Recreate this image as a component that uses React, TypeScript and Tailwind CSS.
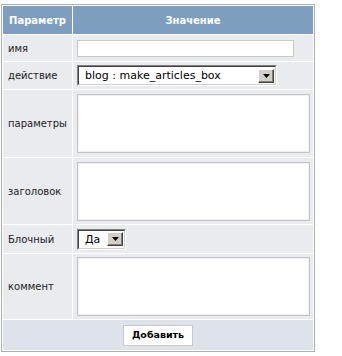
import React from "react";

const font = { fontFamily: '"DejaVu Sans", Verdana, sans-serif' };

function DropBtn() {
  return (
    <div className="flex h-[14px] w-[16px] items-center justify-center border border-t-white border-l-white border-r-[#404040] border-b-[#404040] bg-[#d4d0c8] shadow-[inset_-1px_-1px_0_#808080]">
      <svg width="7" height="4" viewBox="0 0 7 4">
        <path d="M0 0h7L3.5 4z" fill="#000" />
      </svg>
    </div>
  );
}

function Select({ value, w }: { value: string; w: string }) {
  return (
    <div className={`flex h-[21px] ${w} items-center border border-t-[#808080] border-l-[#808080] border-r-white border-b-white bg-white`}>
      <div className="flex h-full w-full items-center border border-t-[#404040] border-l-[#404040] border-r-[#d4d0c8] border-b-[#d4d0c8] pl-[6px] pr-[1px]">
        <span className="flex-1 text-[11px] leading-none text-black" style={font}>
          {value}
        </span>
        <DropBtn />
      </div>
    </div>
  );
}

function Label({ children }: { children: React.ReactNode }) {
  return (
    <div className="flex items-center bg-[#e9ebee] pl-[5px] text-[10px] text-[#222]" style={font}>
      {children}
    </div>
  );
}

function Cell({ children }: { children: React.ReactNode }) {
  return <div className="flex items-center bg-[#e9ebee] pl-[4px] pr-[3px]">{children}</div>;
}

function TextArea() {
  return <div className="h-[59px] w-full border border-[#c4c4c8] bg-white shadow-[inset_0_0_0_1px_#f0f0f0]" />;
}

export default function App() {
  return (
    <div className="min-h-[356px] w-[342px] bg-white pt-[4px] pl-[1px]" style={font}>
      <div className="w-[314px] border border-[#a7afb8] bg-white p-px">
        <div className="grid grid-cols-[69px_1fr] grid-rows-[28px_26px_27px_67px_66px_28px_65px] gap-px">
          <div className="flex items-center justify-center bg-[#7d9ebe] text-[10px] font-bold text-white">
            Параметр
          </div>
          <div className="flex items-center justify-center bg-[#7d9ebe] text-[10px] font-bold text-white">
            Значение
          </div>

          <Label>имя</Label>
          <Cell>
            <div className="h-[17px] w-[217px] border border-[#c8c8cc] bg-white" />
          </Cell>

          <Label>действие</Label>
          <Cell>
            <Select value="blog : make_articles_box" w="w-[200px]" />
          </Cell>

          <Label>параметры</Label>
          <Cell>
            <TextArea />
          </Cell>

          <Label>заголовок</Label>
          <Cell>
            <TextArea />
          </Cell>

          <Label>Блочный</Label>
          <Cell>
            <Select value="Да" w="w-[49px]" />
          </Cell>

          <Label>коммент</Label>
          <Cell>
            <TextArea />
          </Cell>

          <div className="col-span-2 flex h-[30px] items-center justify-center bg-[#dee3eb]">
            <div className="flex h-[21px] w-[70px] items-center justify-center border border-[#c8c8c8] bg-white text-[9.5px] font-bold text-black">
              Добавить
            </div>
          </div>
        </div>
      </div>
    </div>
  );
}
